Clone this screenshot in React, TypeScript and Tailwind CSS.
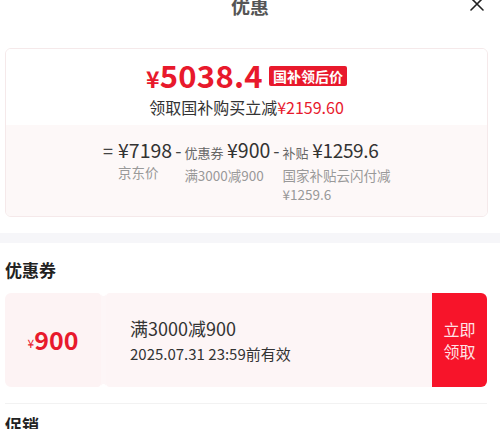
import React from "react";

export default function App() {
  const font = { fontFamily: '"Noto Sans CJK SC", "Noto Sans", sans-serif' };
  return (
    <div className="w-[500px] h-[429px] overflow-hidden bg-white" style={font}>
      <div className="relative h-[36px] -mt-[12px] flex items-center justify-center">
        <span className="text-[19px] font-bold text-[#555]">优惠</span>
        <svg className="absolute right-[15px] top-[8px]" width="16" height="16" viewBox="0 0 16 16">
          <path d="M2 2 L14 14 M14 2 L2 14" stroke="#222" strokeWidth="1.6" strokeLinecap="round" />
        </svg>
      </div>

      <div className="ml-[5px] mr-[12px] mt-[24px] h-[169px] rounded-[6px] border border-[#f5e9ea] overflow-hidden flex flex-col">
        <div className="h-[76px] shrink-0 bg-white flex flex-col items-center pt-[10px]">
          <div className="flex items-center gap-[6px] h-[30px]">
            <span className="text-[#e8192c] font-bold leading-none flex items-baseline">
              <span className="text-[23px]">¥</span>
              <span className="text-[31px] tracking-[0.3px]">5038.4</span>
            </span>
            <span className="bg-[#e8192c] text-white text-[14px] font-bold leading-none px-[4px] py-[3px] rounded-[2px] mt-[4px]">国补领后价</span>
          </div>
          <div className="text-[16px] text-[#333] leading-none mt-[10px]">
            领取国补购买立减<span className="text-[#e8192c]">¥2159.60</span>
          </div>
        </div>
        <div className="flex-1 bg-[#fdf8f8] flex justify-start pl-[97px] pt-[12px]">
          <div className="flex items-start text-[#333]">
            <span className="text-[18px] leading-[26px] text-[#444] mr-[5px]">=</span>
            <div className="flex flex-col">
              <span className="text-[19.5px] leading-[26px]">¥7198</span>
              <span className="text-[13.5px] text-[#999] leading-[19px]">京东价</span>
            </div>
            <span className="text-[18px] leading-[26px] text-[#444] mx-[3px]">-</span>
            <div className="flex flex-col">
              <span className="leading-[26px] whitespace-nowrap"><span className="text-[13px] text-[#666]">优惠券</span> <span className="text-[19.5px]">¥900</span></span>
              <span className="text-[13.5px] text-[#999] leading-[19px]">满3000减900</span>
            </div>
            <span className="text-[18px] leading-[26px] text-[#444] mx-[3px]">-</span>
            <div className="flex flex-col">
              <span className="leading-[26px] whitespace-nowrap"><span className="text-[13px] text-[#666]">补贴</span> <span className="text-[19px] tracking-[-0.3px]">¥1259.6</span></span>
              <span className="text-[13.5px] text-[#999] leading-[19px] whitespace-nowrap">国家补贴云闪付减<br />¥1259.6</span>
            </div>
          </div>
        </div>
      </div>

      <div className="mt-[16px] h-[10px] bg-[#f6f6f9]" />

      <div className="pl-[5px] pr-[13px] pt-[18px]">
        <div className="text-[17px] font-bold text-[#222] leading-none">优惠券</div>
        <div className="mt-[15px] h-[94px] flex">
          <div className="w-[96px] bg-[#fdf3f4] rounded-l-[6px] rounded-r-[4px] flex items-center justify-center text-[#e8192c]">
            <span className="text-[12px] mt-[6px]">¥</span>
            <span className="text-[25px] font-semibold">900</span>
          </div>
          <div className="w-[5px] flex flex-col justify-between bg-[#fdf6f7]">
            <div className="h-[3px] w-full bg-white rounded-b-full" />
            <div className="h-[3px] w-full bg-white rounded-t-full" />
          </div>
          <div className="flex-1 bg-[#fdf5f6] rounded-l-[4px] flex flex-col justify-center pl-[24px] text-[#333]">
            <span className="text-[18px] leading-[26px]">满3000减900</span>
            <span className="text-[15px] leading-[22px] mt-[2px]">2025.07.31 23:59前有效</span>
          </div>
          <div className="w-[55px] bg-[#f7142a] rounded-r-[6px] flex items-center justify-center text-[#ffe3e6] text-[16px] leading-[22px] text-center">
            立即<br />领取
          </div>
        </div>
        <div className="mt-[16px] h-px bg-[#f2f2f2]" />
        <div className="mt-[12px] text-[17px] font-bold text-[#222] leading-none">促销</div>
      </div>
    </div>
  );
}
